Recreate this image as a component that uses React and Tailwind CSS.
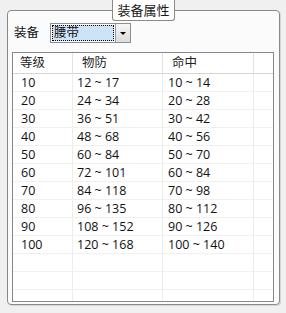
const rows = [
  ["10", "12 ~ 17", "10 ~ 14"],
  ["20", "24 ~ 34", "20 ~ 28"],
  ["30", "36 ~ 51", "30 ~ 42"],
  ["40", "48 ~ 68", "40 ~ 56"],
  ["50", "60 ~ 84", "50 ~ 70"],
  ["60", "72 ~ 101", "60 ~ 84"],
  ["70", "84 ~ 118", "70 ~ 98"],
  ["80", "96 ~ 135", "80 ~ 112"],
  ["90", "108 ~ 152", "90 ~ 126"],
  ["100", "120 ~ 168", "100 ~ 140"],
];

function Row({ cells }) {
  return (
    <div className="flex h-[18px] border-b border-[#f0f0f0] leading-[18px]">
      <div className="w-[60px] shrink-0 border-r border-[#ededed] pl-[8px]">{cells?.[0]}</div>
      <div className="w-[90px] shrink-0 border-r border-[#ededed] pl-[4px]">{cells?.[1]}</div>
      <div className="w-[91px] shrink-0 border-r border-[#ededed] pl-[5px]">{cells?.[2]}</div>
      <div className="flex-1" />
    </div>
  );
}

export default function App() {
  return (
    <div className="relative w-[286px] h-[313px] bg-[#f0f0f0] pt-[10px] pl-[7px] font-['Open_Sans','Noto_Sans_CJK_SC',sans-serif] text-[12.5px] text-[#111]">
      <div className="relative w-[273px] h-[295px] rounded-[4px] border border-[#8a8a8a] bg-[#fbfbfb] shadow-[1px_1px_0_#d6d6d6]">
        {/* title tab */}
        <div className="absolute left-[104px] top-[-11px] w-[63px] h-[21px] rounded-b-[3px] border border-t-0 border-[#8a8a8a] bg-white flex items-center justify-center leading-none text-[13px] text-[#1a1a1a]">
          装备属性
        </div>

        <div className="flex items-center pt-[12px] pl-[6px]">
          <span className="w-[36px] leading-none">装备</span>
          <div className="flex h-[20px] border border-[#8e8e8e] bg-white">
            <div className="w-[62px] m-[1px] border border-dotted border-black bg-[#cfe3f7] flex items-center pl-[1px] leading-none">
              腰带
            </div>
            <div className="w-[15px] border-l border-[#9a9a9a] bg-gradient-to-b from-[#f6f6f6] to-[#dcdcdc] flex items-center justify-center">
              <div className="w-0 h-0 border-l-[3px] border-r-[3px] border-t-[3px] border-l-transparent border-r-transparent border-t-black" />
            </div>
          </div>
        </div>

        <div className="ml-[4px] mt-[9px] w-[262px] h-[250px] border border-[#828790] bg-white overflow-hidden">
          <div className="flex h-[21px] border-b border-[#d5d5d5] leading-[20px] text-[#1e1e1e]">
            <div className="w-[60px] shrink-0 border-r border-[#e2e2e2] pl-[7px]">等级</div>
            <div className="w-[90px] shrink-0 border-r border-[#e2e2e2] pl-[9px]">物防</div>
            <div className="w-[91px] shrink-0 border-r border-[#e2e2e2] pl-[9px]">命中</div>
            <div className="flex-1" />
          </div>
          {rows.map((r) => (
            <Row key={r[0]} cells={r} />
          ))}
          <Row />
          <Row />
          <Row />
        </div>
      </div>
    </div>
  );
}
